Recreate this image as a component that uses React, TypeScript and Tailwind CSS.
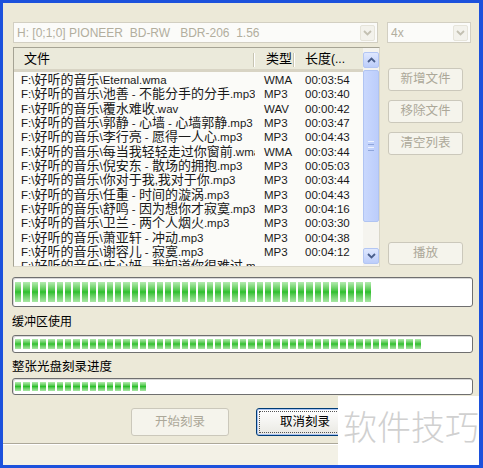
import React from "react";

type Row = { file: string; type: string; len: string };

const ROWS: Row[] = [
  { file: "F:\\好听的音乐\\Eternal.wma", type: "WMA", len: "00:03:54" },
  { file: "F:\\好听的音乐\\池善 - 不能分手的分手.mp3", type: "MP3", len: "00:03:40" },
  { file: "F:\\好听的音乐\\覆水难收.wav", type: "WAV", len: "00:00:42" },
  { file: "F:\\好听的音乐\\郭静 - 心墙 - 心墙郭静.mp3", type: "MP3", len: "00:03:47" },
  { file: "F:\\好听的音乐\\李行亮 - 愿得一人心.mp3", type: "MP3", len: "00:04:43" },
  { file: "F:\\好听的音乐\\每当我轻轻走过你窗前.wma", type: "WMA", len: "00:03:44" },
  { file: "F:\\好听的音乐\\倪安东 - 散场的拥抱.mp3", type: "MP3", len: "00:05:03" },
  { file: "F:\\好听的音乐\\你对于我,我对于你.mp3", type: "MP3", len: "00:03:44" },
  { file: "F:\\好听的音乐\\任重 - 时间的漩涡.mp3", type: "MP3", len: "00:04:43" },
  { file: "F:\\好听的音乐\\舒鸣 - 因为想你才寂寞.mp3", type: "MP3", len: "00:04:16" },
  { file: "F:\\好听的音乐\\卫兰 - 两个人烟火.mp3", type: "MP3", len: "00:03:30" },
  { file: "F:\\好听的音乐\\萧亚轩 - 冲动.mp3", type: "MP3", len: "00:04:38" },
  { file: "F:\\好听的音乐\\谢容儿 - 寂寞.mp3", type: "MP3", len: "00:04:12" },
  // only the top of this one peeks out under the last full row
  { file: "F:\\好听的音乐\\庄心妍 - 我知道你很难过.mp3", type: "", len: "" },
];

// CJK runs are drawn a bit larger than the latin text, like the XP font mix
const Mixed = ({ text }: { text: string }) => (
  <>
    {text.split(/([\u3000-\u9fff\uff00-\uffef]+)/).map((part, i) =>
      /[\u3000-\u9fff\uff00-\uffef]/.test(part) ? (
        <span key={i} className="text-[13px]">
          {part}
        </span>
      ) : (
        <span key={i}>{part}</span>
      )
    )}
  </>
);

const Chevron = ({ up, color }: { up?: boolean; color: string }) => (
  <svg width="9" height="6" viewBox="0 0 9 6">
    <polyline
      points={up ? "1,5 4.5,1.5 8,5" : "1,1 4.5,4.5 8,1"}
      fill="none"
      stroke={color}
      strokeWidth="1.8"
    />
  </svg>
);

const Combo = ({ text, className }: { text: string; className: string }) => (
  <div
    className={`${className} h-[21px] flex items-center border border-[#d2cfc2] bg-[#fbfbf9] pl-[3px] pr-[2px]`}
  >
    <span className="flex-1 whitespace-pre text-[12px] text-[#b2ae9e] leading-none">{text}</span>
    <div className="w-[15px] h-[16px] flex items-center justify-center rounded-[2px] border border-[#e6e4da] bg-[#f3f2ec]">
      <Chevron color="#c3c0b2" />
    </div>
  </div>
);

const SideButton = ({ label, className = "" }: { label: string; className?: string }) => (
  <div
    className={`${className} w-[75px] h-[23px] flex items-center justify-center rounded-[3px] border border-[#cbc8bb] bg-[#f5f4ec] text-[12.5px] text-[#aca899]`}
  >
    {label}
  </div>
);

const Progress = ({
  segs,
  className,
}: {
  segs: number;
  className: string;
}) => (
  <div
    className={`${className} ml-[9px] w-[461px] rounded-[3px] border border-[#6f6f6f] bg-white px-[2px] flex shadow-[inset_1px_1px_0_#d8d8d8]`}
  >
    <div className="flex gap-[2px] h-full">
      {Array.from({ length: segs }).map((_, i) => (
        <div
          key={i}
          className="w-[6.33px] h-full bg-linear-to-b from-[#b4ecb0] via-[#2bbf2b] to-[#a8e7a4]"
        />
      ))}
    </div>
  </div>
);

export default function App() {
  return (
    <div className="relative w-[483px] h-[468px] overflow-hidden border-l-[3px] border-r-[4px] border-t-[3px] border-b-[3px] border-[#1c51dc] bg-[#ece9d8] flex flex-col font-['Liberation_Sans','Noto_Sans_CJK_SC',sans-serif] text-black">
      {/* drive + speed */}
      <div className="mt-[19px] pl-[10px] flex gap-[9px]">
        <Combo className="w-[365px]" text="H: [0;1;0] PIONEER  BD-RW   BDR-206  1.56" />
        <Combo className="w-[84px]" text="4x" />
      </div>

      {/* file list + side buttons */}
      <div className="mt-[4px] pl-[10px] flex">
        <div className="w-[367px] h-[220px] flex border border-[#a5a394] border-b-[#d9d6c8] border-r-[#d9d6c8] bg-[#fbfbf8]">
          <div className="w-[349px] flex flex-col overflow-hidden">
            <div className="h-[24px] shrink-0 flex items-center bg-[#ebeadb] border-b-[3px] border-[#d8d4c4] text-[12px]">
              <div className="w-[241px] pl-[10px] relative h-full flex items-center">
                <Mixed text="文件" />
                <div className="absolute right-0 top-[5px] h-[14px] w-[2px] border-l border-[#c7c4b2] bg-white" />
              </div>
              <div className="w-[40px] pl-[11px] relative h-full flex items-center">
                <Mixed text="类型" />
                <div className="absolute right-0 top-[5px] h-[14px] w-[2px] border-l border-[#c7c4b2] bg-white" />
              </div>
              <div className="w-[68px] pl-[10px] h-full flex items-center whitespace-nowrap">
                <Mixed text="长度(..." />
              </div>
            </div>
            <div className="pt-[1px] text-[11.5px] text-[#1a1a1a]">
              {ROWS.map((r) => (
                <div key={r.file} className="flex h-[14.33px] leading-[14.33px] whitespace-nowrap">
                  <div className="w-[241px] pl-[7px] overflow-hidden">
                    <Mixed text={r.file} />
                  </div>
                  <div className="w-[40px] pl-[9px] overflow-hidden">{r.type}</div>
                  <div className="w-[68px] pl-[10px] overflow-hidden">{r.len}</div>
                </div>
              ))}
            </div>
          </div>
          {/* scrollbar */}
          <div className="w-[16px] flex flex-col bg-[#f5f4ef] pt-[4px] pb-[2px]">
            <div className="h-[16px] flex items-center justify-center rounded-[2px] border border-[#b3c6f3] bg-linear-to-b from-[#dfe8fe] to-[#bccdfa]">
              <Chevron up color="#4a5f8c" />
            </div>
            <div className="mt-[2px] h-[152px] rounded-[2px] border border-[#b0c4f2] bg-linear-to-r from-[#c9d8fd] to-[#bccdfb] flex flex-col items-center justify-center gap-[2px]">
              <div className="w-[6px] h-[1px] bg-[#eef3ff]" />
              <div className="w-[6px] h-[1px] bg-[#8fa6dc]" />
              <div className="w-[6px] h-[1px] bg-[#eef3ff]" />
              <div className="w-[6px] h-[1px] bg-[#8fa6dc]" />
            </div>
            <div className="mt-auto h-[16px] flex items-center justify-center rounded-[2px] border border-[#b3c6f3] bg-linear-to-b from-[#dfe8fe] to-[#bccdfa]">
              <Chevron color="#4a5f8c" />
            </div>
          </div>
        </div>
        <div className="ml-[8px] h-[220px] flex flex-col pt-[21px] pb-[2px] gap-[9px]">
          <SideButton label="新增文件" />
          <SideButton label="移除文件" />
          <SideButton label="清空列表" />
          <SideButton label="播放" className="mt-auto" />
        </div>
      </div>

      <Progress segs={43} className="mt-[10px] h-[30px] py-[4px]" />
      <div className="mt-[7px] ml-[9px] h-[16px] leading-[16px] text-[12px]">缓冲区使用</div>
      <Progress segs={49} className="mt-[5px] h-[18px] py-[3px]" />
      <div className="mt-[6px] ml-[9px] h-[16px] leading-[16px] text-[12.5px]">整张光盘刻录进度</div>
      <Progress segs={16} className="mt-[3px] h-[17px] py-[3px]" />

      {/* actions */}
      <div className="mt-[13px] h-[28px] flex">
        <div className="ml-[128px] w-[98px] h-full flex items-center justify-center rounded-[3px] border border-[#cbc8bb] bg-[#f5f4ec] text-[12.5px] text-[#aca899]">
          开始刻录
        </div>
        <div className="ml-[27px] w-[98px] h-full rounded-[3px] border border-[#003c74] bg-linear-to-b from-white to-[#e9e8e2] p-[2px] shadow-[inset_0_0_0_1px_#a9c3f3]">
          <div className="h-full flex items-center justify-center border border-dotted border-[#555] text-[12.5px]">
            取消刻录
          </div>
        </div>
      </div>

      <div className="mt-[7px] h-[2px] border-t border-[#aca899] bg-white" />
      <div className="flex-1 bg-[#f3f1e6]" />

      {/* watermark overlay */}
      <div className="absolute right-[-4px] bottom-[-3px] w-[145px] h-[72px] bg-white pl-[5px] pt-[10px]">
        <div className="text-[34px] leading-[40px] text-[#d0d0d0] font-['Noto_Sans_CJK_SC',sans-serif] font-light whitespace-nowrap">
          软件技巧
        </div>
      </div>
    </div>
  );
}
